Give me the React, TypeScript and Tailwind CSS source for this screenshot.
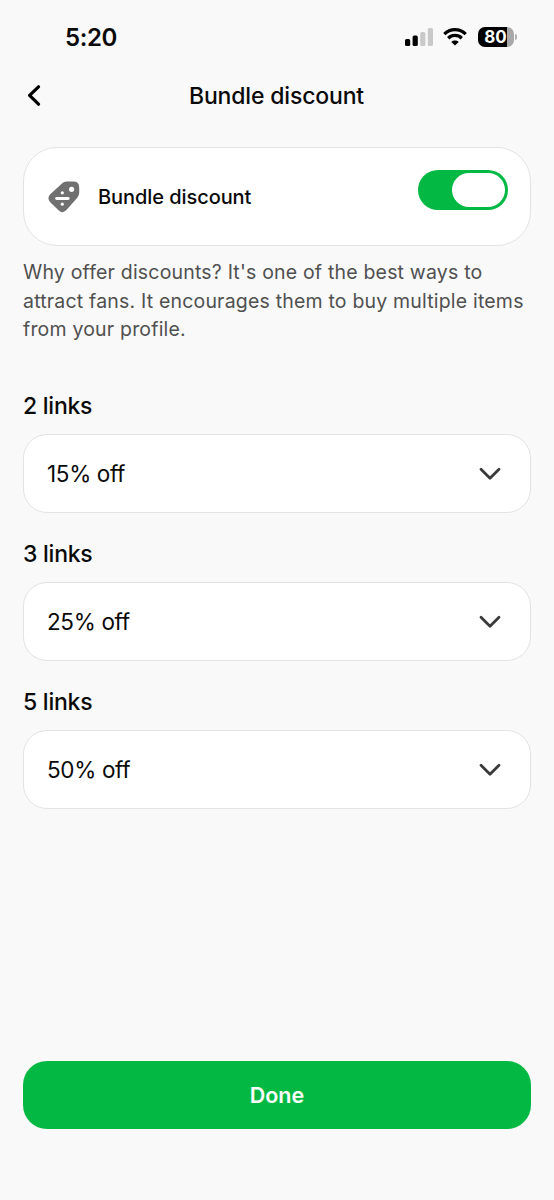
import { useState } from 'react'

interface Tier {
  label: string
  value: string
}

const tiers: Tier[] = [
  { label: '2 links', value: '15% off' },
  { label: '3 links', value: '25% off' },
  { label: '5 links', value: '50% off' },
]

function StatusBar() {
  return (
    <div className="flex h-[74px] items-center justify-between pl-[65px] pr-[37px]">
      <span className="pt-[2px] text-[24px] font-semibold leading-none tracking-[-0.4px]">5:20</span>
      <div className="flex items-center">
        {/* Signal */}
        <svg width="28" height="18" viewBox="0 0 28 18">
          <rect x="0" y="11" width="5.2" height="7" rx="1.6" fill="#000" />
          <rect x="7.6" y="7.5" width="5.2" height="10.5" rx="1.6" fill="#000" />
          <rect x="15.2" y="4" width="5.2" height="14" rx="1.6" fill="#c9c9c9" />
          <rect x="22.8" y="0" width="5.2" height="18" rx="1.6" fill="#c9c9c9" />
        </svg>
        {/* Wifi */}
        <svg className="ml-[10.5px]" width="24" height="18" viewBox="0 0 24 18" fill="none" stroke="#000" strokeWidth="3.3">
          <path d="M1.3 6.1C7.3 .2 16.7 .2 22.7 6.1" />
          <path d="M5.2 10.2C9 6.5 15 6.5 18.8 10.2" />
          <path d="M12 17.6L8.3 13.9C10.4 12 13.6 12 15.7 13.9Z" fill="#000" stroke="none" />
        </svg>
        {/* Battery */}
        <div className="ml-[10.5px] flex h-[20px] w-[36px] items-center justify-center overflow-hidden rounded-[7px] bg-linear-to-r from-black from-80% to-[#a8a8a8] to-80%">
          <span className="text-[17px] font-bold leading-none text-white">80</span>
        </div>
        <div className="ml-[1.5px] h-[6px] w-[2px] rounded-r-full bg-[#b0b0b0]" />
      </div>
    </div>
  )
}

function TagIcon() {
  return (
    <svg className="mt-px" width="32" height="32" viewBox="0 0 32 32">
      <path
        d="M14.2 2.2Q16 .6 18.4 .6H25.4Q31.2 .6 31.2 6.4V11.8Q31.2 14.6 29.3 16.7L18.2 29.3Q14.6 32.8 10.8 29.6L2.2 21.2Q-1.2 17.4 2 13.6Z"
        fill="#707070"
      />
      <circle cx="23.6" cy="8.3" r="2.6" fill="#fff" />
      <circle cx="14.3" cy="11.8" r="1.6" fill="#fff" />
      <circle cx="14.3" cy="23.2" r="1.6" fill="#fff" />
      <path d="M8.6 17.5H20.2" stroke="#fff" strokeWidth="2.8" strokeLinecap="round" />
    </svg>
  )
}

export default function App() {
  const [enabled, setEnabled] = useState(true)

  return (
    <div className="flex h-[1200px] w-[554px] flex-col bg-[#f9f9f9] font-['Inter',sans-serif] text-[#0a0a0a]">
      <StatusBar />

      {/* Header */}
      <header className="flex h-[44px] items-center px-[27px]">
        <button className="w-6" aria-label="Back">
          <svg width="14" height="22" viewBox="0 0 14 22" fill="none" stroke="#000" strokeWidth="3.2" strokeLinecap="round" strokeLinejoin="round">
            <path d="M11.5 1.8L2.6 10.4L11.5 19.2" />
          </svg>
        </button>
        <h1 className="flex-1 pr-[25px] text-center text-[23px] font-medium tracking-[-0.17px]">Bundle discount</h1>
      </header>

      <main className="flex flex-1 flex-col px-[23px] pt-[29px]">
        {/* Toggle card */}
        <section className="flex h-[98.5px] items-center rounded-[34px] border-[1.5px] border-[#e3e3e3] bg-white pl-[24px] pr-[22.5px]">
          <TagIcon />
          <span className="ml-[18px] flex-1 pt-px text-[20px] font-medium tracking-[-0.07px]">Bundle discount</span>
          <button
            role="switch"
            aria-checked={enabled}
            aria-label="Bundle discount"
            onClick={() => setEnabled(!enabled)}
            className={`mb-3 flex h-[40px] w-[90px] items-center rounded-full p-[3px] ${enabled ? 'justify-end bg-[#03b943]' : 'justify-start bg-[#cccccc]'}`}
          >
            <span className="h-[34px] w-[53px] rounded-full bg-white" />
          </button>
        </section>

        <p className="mt-[12.5px] whitespace-nowrap text-[19.5px] leading-[28.5px] tracking-[0.19px] text-[#505050]">
          Why offer discounts? It's one of the best ways to
          <br />
          attract fans. It encourages them to buy multiple items
          <br />
          from your profile.
        </p>

        {/* Discount tiers */}
        <div className="mt-[48px] flex flex-col gap-[27px]">
          {tiers.map((tier) => (
            <div key={tier.label}>
              <h2 className="text-[23px] font-medium leading-[28px] tracking-[-0.25px]">{tier.label}</h2>
              <button className="mt-[14px] flex h-[79px] w-full items-center justify-between rounded-[24px] border-[1.5px] border-[#e3e3e3] bg-white pl-[23px] pr-[29px] pt-[2px]">
                <span className="text-[22.5px] tracking-[-0.35px]">{tier.value}</span>
                <svg width="22" height="14" viewBox="0 0 22 14" fill="none" stroke="#3a3a3a" strokeWidth="2.8" strokeLinecap="round" strokeLinejoin="round">
                  <path d="M2 2.2L11 11.2L20 2.2" />
                </svg>
              </button>
            </div>
          ))}
        </div>
      </main>

      <footer className="px-[23px] pb-[71px]">
        <button className="h-[68px] w-full rounded-[24px] bg-[#03b943] text-[21.5px] font-semibold text-white">Done</button>
      </footer>
    </div>
  )
}
